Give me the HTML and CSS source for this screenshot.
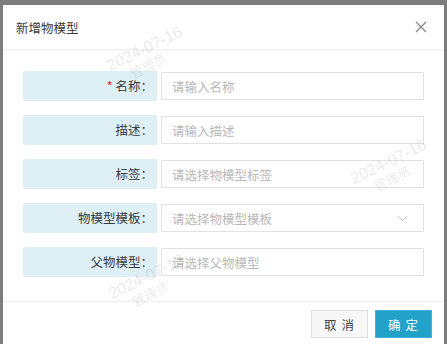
FILE: index.html
```html
<!DOCTYPE html>
<html lang="zh-CN">
<head>
    <meta charset="UTF-8">
    <meta name="viewport" content="width=device-width, initial-scale=1.0">
    <title>新增物模型</title>
    <link rel="stylesheet" href="styles.css">
</head>
<body>
    <div class="modal">
        <div class="modal-header">
            <span class="modal-title">新增物模型</span>
            <svg class="modal-close" width="12" height="12" viewBox="0 0 12 12">
                <path d="M1 1L11 11M11 1L1 11" stroke="#888" stroke-width="1.3" fill="none"/>
            </svg>
        </div>
        <div class="modal-body">
            <div class="form-row">
                <label class="form-label"><span class="required">*</span> 名称：</label>
                <div class="form-input"><span class="placeholder">请输入名称</span></div>
            </div>
            <div class="form-row">
                <label class="form-label">描述：</label>
                <div class="form-input"><span class="placeholder">请输入描述</span></div>
            </div>
            <div class="form-row">
                <label class="form-label">标签：</label>
                <div class="form-input"><span class="placeholder">请选择物模型标签</span></div>
            </div>
            <div class="form-row">
                <label class="form-label">物模型模板：</label>
                <div class="form-input select">
                    <span class="placeholder">请选择物模型模板</span>
                    <svg class="arrow" width="11" height="7" viewBox="0 0 11 7">
                        <path d="M1 1L5.5 5.5L10 1" stroke="#c8c8c8" stroke-width="1" fill="none"/>
                    </svg>
                </div>
            </div>
            <div class="form-row">
                <label class="form-label">父物模型：</label>
                <div class="form-input"><span class="placeholder">请选择父物模型</span></div>
            </div>
        </div>
        <div class="modal-footer">
            <button class="btn btn-cancel">取 消</button>
            <button class="btn btn-ok">确 定</button>
        </div>
    </div>

    <div class="watermark wm-1"><div>2024-07-16</div><div class="wm-name">管理员</div></div>
    <div class="watermark wm-2"><div>2024-07-16</div><div class="wm-name">管理员</div></div>
    <div class="watermark wm-3"><div>2024-07-16</div><div class="wm-name">管理员</div></div>
</body>
</html>
```

FILE: styles.css
```css
body {
    margin: 0;
    background: #7d7d7d;
    font-family: "Noto Sans CJK SC", "Liberation Sans", sans-serif;
    font-size: 12.5px;
    color: #3a3a3a;
    position: relative;
    height: 344px;
    overflow: hidden;
}
.modal {
    margin: 5px 3px 0 3px;
    width: 441px;
    height: 350px;
    background: #fff;
}
.modal-header {
    height: 44px;
    display: flex;
    align-items: center;
    justify-content: space-between;
    padding: 0 17px 0 13px;
    border-bottom: 1px solid #f0f0f0;
    box-shadow: 0 1px 3px rgba(0, 0, 0, 0.04);
}
.modal-close {
    display: block;
}
.modal-body {
    padding: 21px 20px 10px 20px;
}
.form-row {
    display: flex;
    align-items: center;
    height: 30px;
    margin-bottom: 14px;
}
.form-label {
    width: 130px;
    height: 30px;
    line-height: 30px;
    padding-right: 4px;
    background: #def0f6;
    text-align: right;
    margin-right: 4px;
}
.required {
    color: #e02020;
}
.form-input {
    flex: 1;
    height: 26px;
    border: 1px solid #e2e2e2;
    display: flex;
    align-items: center;
    justify-content: space-between;
    padding: 0 15px 0 10px;
}
.placeholder {
    color: #b8b8b8;
}
.arrow {
    display: block;
}
.modal-footer {
    border-top: 1px solid #f0f0f0;
    box-shadow: 0 -1px 3px rgba(0, 0, 0, 0.03);
    padding: 8px 12px;
    display: flex;
    justify-content: flex-end;
    gap: 7px;
}
.btn {
    width: 57px;
    height: 28px;
    font-family: "Noto Sans CJK SC", sans-serif;
    font-size: 12.5px;
    letter-spacing: 1px;
    cursor: pointer;
    padding: 0;
}
.btn-cancel {
    background: #f7f7f7;
    border: 1px solid #dedede;
    color: #444;
}
.btn-ok {
    background: #22a1c9;
    border: 1px solid #3fb1d4;
    color: #fff;
}
.watermark {
    position: absolute;
    width: 120px;
    text-align: center;
    transform: rotate(-26deg);
    color: rgba(0, 0, 0, 0.1);
    font-family: "Liberation Sans", "Noto Sans CJK SC", sans-serif;
    font-size: 16px;
    line-height: 17px;
    pointer-events: none;
}
.wm-name {
    font-family: "Noto Sans CJK SC", sans-serif;
    font-size: 13px;
    padding-right: 8px;
}
.wm-1 {
    left: 88px;
    top: 39px;
}
.wm-2 {
    left: 332px;
    top: 152px;
}
.wm-3 {
    left: 90px;
    top: 267px;
}
```
